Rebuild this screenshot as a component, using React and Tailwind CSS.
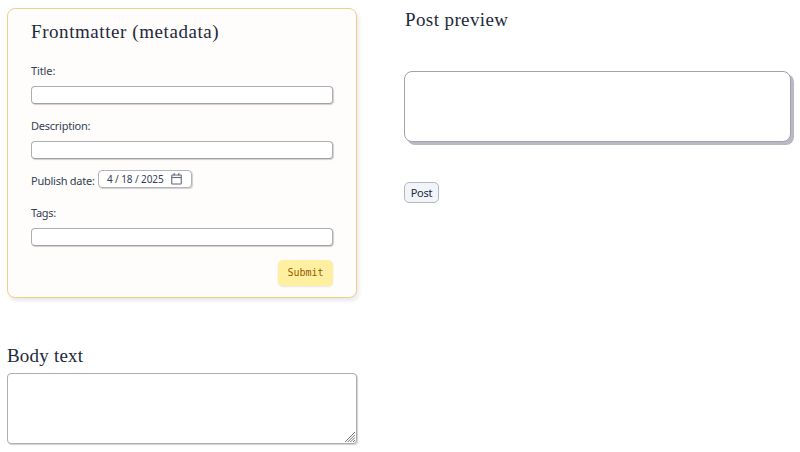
const heading = "font-['Liberation_Serif',serif] text-[19px] leading-6 text-[#1e293b] whitespace-nowrap";
const label = "font-['Noto_Sans',sans-serif] text-[11px] leading-4 text-[#334155] whitespace-nowrap";
const field =
  "block w-full h-[18px] rounded-[4px] border border-[#adadb2] border-b-[#a0a0a5] bg-white shadow-[1px_1px_1px_rgba(0,0,0,0.18)] outline-none";

function Field({ name, tracking, className }) {
  return (
    <label className={`block ${className}`}>
      <span className={`block ${label} ${tracking}`}>{name}</span>
      <input className={`${field} mt-[7px]`} />
    </label>
  );
}

function CalendarIcon() {
  return (
    <svg width="11" height="12" viewBox="0 0 11 12" fill="none" stroke="#64687a" strokeWidth="1.1">
      <rect x="0.75" y="2" width="9.5" height="9" rx="0.6" />
      <path d="M0.75 4.5h9.5" />
      <path d="M3.2 0v2.6M7.8 0v2.6" />
    </svg>
  );
}

function Frontmatter() {
  return (
    <form className="h-[290px] w-[350px] rounded-[8px] border border-[#efd08b] bg-[#fffdfb] px-[23px] pt-[11px] shadow-[2px_3px_4px_rgba(0,0,0,0.09)]">
      <h2 className={`${heading} tracking-[0.57px]`}>Frontmatter (metadata)</h2>
      <Field name="Title:" tracking="tracking-[-0.1px]" className="mt-[19px]" />
      <Field name="Description:" tracking="tracking-[-0.25px]" className="mt-[14px]" />
      <div className="mt-[11px] flex h-[18px] items-start gap-1">
        <span className={`mt-[3px] w-[63px] ${label} tracking-[-0.25px]`}>Publish date:</span>
        <div className="flex h-[18px] w-[94px] items-center justify-between rounded-[4px] border border-[#b5b5b9] bg-white pr-[9px] pl-2 shadow-[1px_1px_1px_rgba(0,0,0,0.18)]">
          <span className="font-['Noto_Sans',sans-serif] text-[10px] leading-4 tracking-[-0.1px] whitespace-nowrap text-[#334155]">
            4 / 18 / 2025
          </span>
          <CalendarIcon />
        </div>
      </div>
      <Field name="Tags:" tracking="tracking-[-0.3px]" className="mt-[17px]" />
      <div className="mt-[14px] flex justify-end">
        <button
          type="button"
          className="h-[26px] w-[55px] rounded-[5px] bg-[#fef0a0] font-['DejaVu_Sans_Mono',monospace] text-[10px] leading-none text-[#965a00] shadow-[0_1px_2px_rgba(0,0,0,0.1)]"
        >
          Submit
        </button>
      </div>
    </form>
  );
}

export default function App() {
  return (
    <main className="flex h-[452px] w-[800px] overflow-hidden bg-white pl-[7px]">
      <section className="w-[350px] pt-2">
        <Frontmatter />
        <h2 className={`mt-[46px] ${heading} tracking-[0.2px]`}>Body text</h2>
        <div className="mt-[5px] flex h-[71px] w-[350px] items-end justify-end rounded-[4px] border border-[#adadb2] bg-white pr-px pb-px shadow-[1px_1px_1px_rgba(0,0,0,0.18)]">
          <svg width="10" height="10" viewBox="0 0 10 10" stroke="#66666a" strokeWidth="0.9">
            <path d="M0 10L10 0M2.7 10L10 2.7M5.4 10L10 5.4M8 10L10 8" />
          </svg>
        </div>
      </section>
      <section className="ml-[47px] w-[387px] pt-2">
        <h2 className={`${heading} pl-px tracking-[0.4px]`}>Post preview</h2>
        <div className="mt-[39px] h-[71px] w-[387px] rounded-[8px] border border-[#a1a1b0] bg-white shadow-[3px_3px_0_#b9b9c6]" />
        <button
          type="button"
          className="mt-10 block h-[21px] w-[35px] rounded-[5px] border border-[#b4b8bf] bg-[#f1f5f9] font-['Noto_Sans',sans-serif] text-[11px] leading-4 tracking-[-0.2px] text-[#1e293b]"
        >
          Post
        </button>
      </section>
    </main>
  );
}
